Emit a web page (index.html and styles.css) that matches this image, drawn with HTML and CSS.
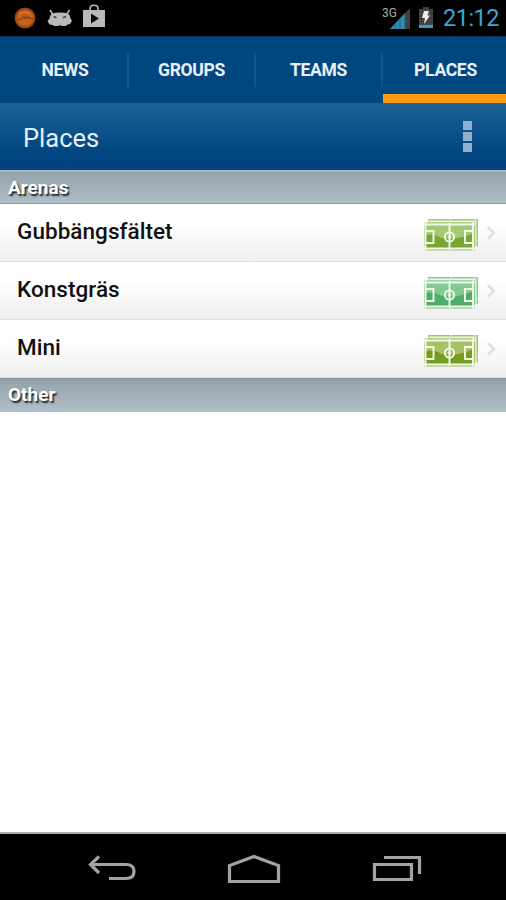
FILE: index.html
```
<!DOCTYPE html>
<html lang="sv">
<head>
<meta charset="UTF-8">
<meta name="viewport" content="width=device-width, initial-scale=1.0">
<title>Places</title>
<link rel="stylesheet" href="styles.css">
</head>

<body>

<svg class="defs" width="0" height="0">
    <defs>
        <radialGradient id="ball" cx="50%" cy="50%" r="55%">
            <stop offset="0" stop-color="#b85a1c"/>
            <stop offset=".6" stop-color="#c9641d"/>
            <stop offset="1" stop-color="#6e2c0e"/>
        </radialGradient>
        <symbol id="pitch" viewBox="0 0 58 36">
            <path class="back" d="M5 2h50v27H5z"/>
            <path class="dash" d="M5 2.500h49.500v27"/>
            <path class="glow" d="M7 4.500h45v24"/>
            <path class="base" d="M2 6.500h49v26H2z"/>
            <path class="shade" d="M2 18Q12 16 18 21Q33 24 51 16V32.500H2z"/>
            <path class="lines" d="M1 7.500h51M1 31.500h51M2.500 5.500v28M50 5.500v28M26.500 6v27M3 14h7.500v12H3M50 14h-8v12H50"/>
            <circle class="lines" cx="26.500" cy="20" r="4.600"/>
            <circle class="spot" cx="26.500" cy="20" r="1.300"/>
        </symbol>
    </defs>
</svg>

<div class="statusbar">
    <div class="notes">
        <svg width="22" height="22" viewBox="0 0 22 22">
            <circle cx="11" cy="11" r="10.500" fill="url(#ball)"/>
            <path d="M3 13q4 0 7-3l2 1 2-1q2 2 5 2" fill="none" stroke="#8a3f16" stroke-width="1.400"/>
            <path d="M5 7q6-4 12 0" fill="none" stroke="#d9822a" stroke-width="1.200"/>
        </svg>
        <svg class="droid" width="26" height="19" viewBox="0 0 26 19">
            <path d="M3 1l2.500 4M22.500 1L20 5" stroke="#bababa" stroke-width="1.500"/>
            <path d="M5 4.500Q13 2.500 21 4.500Q23.500 7 23.500 9.500L25 11.500 23 15 20.500 15.500 19 17H14.500L13 16 11.500 17H7L5.500 16 2.500 15.500.500 12 2.500 9.500Q2.500 7 5 4.500z" fill="#bababa"/>
            <path d="M6.500 7.500l3 1.200M19 7.500l-3 1.200" stroke="#444" stroke-width="1.600"/>
        </svg>
        <svg class="bag" width="24" height="24" viewBox="0 0 24 24">
            <path d="M8 6V4.500Q8 1.200 12 1.200T16 4.500V6" fill="none" stroke="#bababa" stroke-width="1.600"/>
            <path d="M1 6h22v17H1z" fill="#bababa"/>
            <path d="M9 9.500v10l8-5z" fill="#0a0a0a"/>
        </svg>
    </div>
    <div class="system">
        <div class="signal">
            <span>3G</span>
            <svg width="22" height="23" viewBox="0 0 22 23">
                <path d="M1 22L21 1v21z" fill="#414141"/>
                <path d="M1 22L16 6v16z" fill="#2f8bb0"/>
                <path d="M6 16v6M11 11v11M16 6v16" stroke="#195a78" stroke-width=".8"/>
            </svg>
        </div>
        <svg class="battery" width="16" height="23" viewBox="0 0 16 23">
            <path d="M1 3h4V1h6v2h4v19H1z" fill="#424242"/>
            <path d="M1 19h14v3H1z" fill="#3a9dc4"/>
            <path d="M6 5h5L9.500 9.500H12L6 18l1-6H4z" fill="#eee"/>
        </svg>
        <span class="time">21:12</span>
    </div>
</div>

<div class="tabs">
    <div class="tab">NEWS</div>
    <div class="tab">GROUPS</div>
    <div class="tab">TEAMS</div>
    <div class="tab active">PLACES</div>
</div>

<div class="titlebar">
    <h1>Places</h1>
    <div class="menu"><i></i><i></i><i></i></div>
</div>

<div class="content">
    <h2>Arenas</h2>
    <div class="row">
        <span>Gubbängsfältet</span>
        <svg class="pitch" width="58" height="36"><use href="#pitch"/></svg>
        <svg class="arrow" width="10" height="16" viewBox="0 0 10 16"><path d="M2 2l5.500 6L2 14"/></svg>
    </div>
    <div class="row">
        <span>Konstgräs</span>
        <svg class="pitch mint" width="58" height="36"><use href="#pitch"/></svg>
        <svg class="arrow" width="10" height="16" viewBox="0 0 10 16"><path d="M2 2l5.500 6L2 14"/></svg>
    </div>
    <div class="row">
        <span>Mini</span>
        <svg class="pitch olive" width="58" height="36"><use href="#pitch"/></svg>
        <svg class="arrow" width="10" height="16" viewBox="0 0 10 16"><path d="M2 2l5.500 6L2 14"/></svg>
    </div>
    <h2 class="other">Other</h2>
</div>

<div class="navbar">
    <svg width="48" height="28" viewBox="0 0 48 28">
        <path d="M11 1.500L2.500 9.500L11 18M3 9.500H38Q46 9.500 46 16.500T38 23.500H21"/>
    </svg>
    <svg width="54" height="30" viewBox="0 0 54 30">
        <path d="M2.500 27.500V11.500L27 2.500L51.500 11.500V27.500z"/>
    </svg>
    <svg width="50" height="28" viewBox="0 0 50 28">
        <path d="M2.500 9.500H39.500V24.500H2.500zM12 2.500H47.500V19"/>
    </svg>
</div>

</body>
</html>
```
FILE: styles.css
```
*{
    box-sizing:border-box;
}

body{
    margin:0;
    height:900px;
    display:flex;
    flex-direction:column;
    font-family:Roboto,"Liberation Sans",sans-serif;
    background:#fff;
    overflow:hidden;
}

svg{
    display:block;
    flex:none;
}

.defs{
    position:absolute;
}

.statusbar{
    height:36px;
    flex:none;
    display:flex;
    justify-content:space-between;
    background:#000;
    padding:0 7px 0 14px;
}

.notes,
.system{
    display:flex;
    align-items:center;
}

.droid{
    margin-left:11px;
}

.bag{
    margin:-4px 0 0 9px;
}

.signal{
    display:flex;
}

.signal span{
    color:#aaa;
    font-size:12px;
    line-height:12px;
    margin-right:-8px;
}

.battery{
    margin:-1px 0 0 7px;
}

.time{
    width:56px;
    margin-left:9px;
    color:#35aad6;
    font-size:23.500px;
    line-height:36px;
    letter-spacing:-.5px;
    white-space:nowrap;
}

.tabs{
    height:67px;
    flex:none;
    display:grid;
    grid-template-columns:129px 127px 127px 1fr;
    background:#00467f;
    border-top:1px solid #003661;
}

.tab{
    display:flex;
    align-items:center;
    justify-content:center;
    color:#e9f0fb;
    font-size:17.500px;
    font-weight:bold;
    letter-spacing:-.3px;
    background:linear-gradient(#16548b,#16548b) right 16px/2px 34px no-repeat;
    background-position:right 16px;
    padding-left:1px;
}

.tab:nth-child(2),
.tab:nth-child(3){
    padding-left:0;
    padding-right:2px;
}

.tab.active{
    background:none;
    border-bottom:9px solid #ff9a17;
    padding:9px 0 0 2px;
}

.titlebar{
    height:67px;
    flex:none;
    display:flex;
    align-items:center;
    justify-content:space-between;
    padding:0 34px 0 23px;
    background:linear-gradient(#1b6295,#00457f 75%);
}

h1{
    margin:2px 0 0;
    color:#e8eef8;
    font-size:25.500px;
    font-weight:normal;
}

.menu{
    display:grid;
    gap:2px;
}

.menu i{
    width:9px;
    height:9px;
    background:#8fb1cd;
}

.content{
    flex:1;
}

h2{
    height:34px;
    margin:0;
    padding-left:8px;
    border-top:2px solid #aeb6c5;
    border-bottom:1px solid #8b959c;
    background:linear-gradient(#93a1aa,#b0bec7);
    color:#fff;
    font-size:19px;
    line-height:32px;
    text-shadow:1.500px 1.500px 1.500px #222;
}

h2.other{
    border-top:1px solid #85919a;
    border-bottom-color:#b5b9c3;
}

.row{
    height:58px;
    display:flex;
    align-items:center;
    padding:0 10px 0 17px;
    border-bottom:1px solid #e2e2e2;
    background:linear-gradient(#fff 35%,#eee);
    color:#111;
    font-size:22.500px;
    font-weight:500;
}

.row span{
    flex:1;
    margin-top:-3px;
    letter-spacing:.05px;
}

.pitch{
    margin:4px 5px 0 0;
    --back:#c8dcaa;
    --base:#a5c872;
    --shade:#78a534;
}

.mint{
    --back:#bce5c4;
    --base:#82ca92;
    --shade:#50ac68;
}

.olive{
    --back:#cfdcaa;
    --base:#a8c066;
    --shade:#759b20;
}

.back{
    fill:var(--back);
}

.base{
    fill:var(--base);
    stroke:var(--base);
    stroke-width:2;
}

.shade{
    fill:var(--shade);
}

.lines{
    fill:none;
    stroke:#f3faea;
    stroke-width:1.900;
}

.glow{
    fill:none;
    stroke:#eef6e2;
    stroke-width:1;
}

.dash{
    fill:none;
    stroke:var(--base);
    stroke-width:1;
    stroke-dasharray:22 2;
}

.spot{
    fill:#f3faea;
}

.arrow path{
    fill:none;
    stroke:#e2e2e2;
    stroke-width:3;
}

.navbar{
    height:68px;
    flex:none;
    display:flex;
    align-items:center;
    justify-content:center;
    gap:91px;
    padding:4px 0 0 3px;
    background:#000;
    border-top:2px solid #aaa;
}

.navbar path{
    fill:none;
    stroke:#a3a3a3;
    stroke-width:3.200;
}
```
